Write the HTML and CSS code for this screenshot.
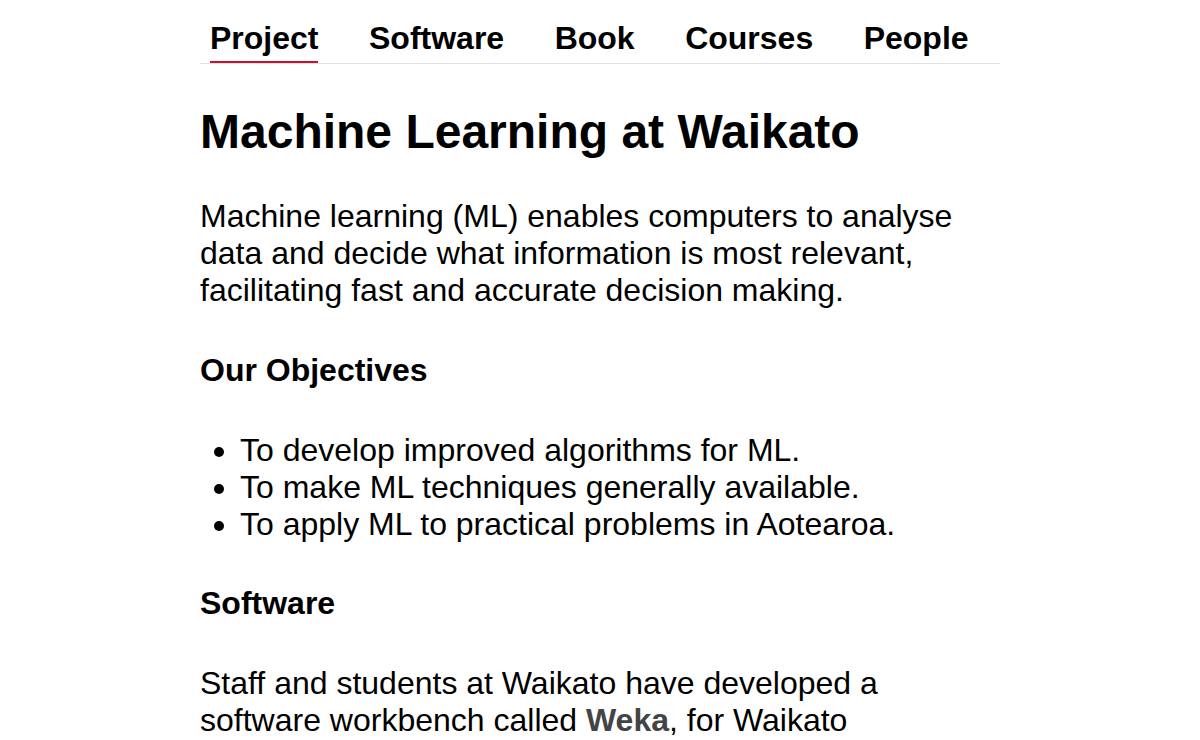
FILE: index.html
```html
<!DOCTYPE html>
<html lang="en">
<head>
<meta charset="utf-8">
<title>Machine Learning at Waikato</title>
<link rel="stylesheet" href="styles.css">
</head>
<body>
<div class="page">
  <nav class="topnav">
    <a class="navlink active" href="#">Project</a>
    <a class="navlink" href="#">Software</a>
    <a class="navlink" href="#">Book</a>
    <a class="navlink" href="#">Courses</a>
    <a class="navlink" href="#">People</a>
  </nav>
  <main class="content">
    <h1 class="title">Machine Learning at Waikato</h1>
    <p class="para">Machine learning (ML) enables computers to analyse data and decide what information is most relevant, facilitating fast and accurate decision making.</p>
    <h3 class="subhead">Our Objectives</h3>
    <ul class="objectives">
      <li>To develop improved algorithms for ML.</li>
      <li>To make ML techniques generally available.</li>
      <li>To apply ML to practical problems in Aotearoa.</li>
    </ul>
    <h3 class="subhead">Software</h3>
    <p class="para">Staff and students at Waikato have developed a software workbench called <a class="weka" href="#">Weka</a>, for Waikato Environment for Knowledge Analysis.</p>
  </main>
</div>
</body>
</html>
```

FILE: styles.css
```css
html, body {
  margin: 0;
  padding: 0;
  background: #ffffff;
}

body {
  font-family: "Liberation Sans", Arial, sans-serif;
  color: #000000;
  font-size: 32px;
  line-height: 37px;
}

.page {
  width: 800px;
  margin: 0 auto;
}

.topnav {
  display: flex;
  gap: 50.5px;
  padding: 0 10px;
  border-bottom: 1px solid #e3e3e3;
}

.navlink {
  display: block;
  font-weight: bold;
  color: #000000;
  text-decoration: none;
  padding: 20px 0 4px;
  border-bottom: 2px solid transparent;
}

.navlink.active {
  border-bottom-color: #c8102e;
}

.title {
  font-size: 48px;
  line-height: 55px;
  font-weight: bold;
  margin: 40px 0 39px;
}

.para {
  margin: 0 0 43px;
}

.subhead {
  font-size: 32px;
  line-height: 37px;
  font-weight: bold;
  margin: 0 0 43px;
}

.objectives {
  margin: 0 0 42px;
  padding-left: 40px;
}

.weka {
  color: #444444;
  font-weight: bold;
  text-decoration: none;
}
```
